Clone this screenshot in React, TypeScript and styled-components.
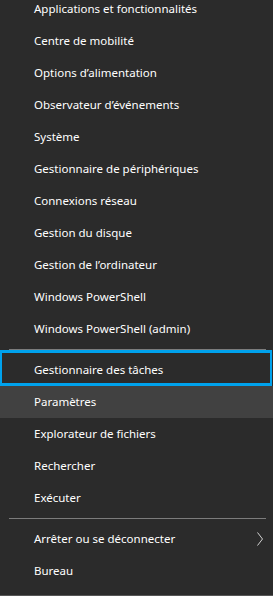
import React from "react";
import styled, { createGlobalStyle } from "styled-components";

const Global = createGlobalStyle`
  html, body { margin: 0; padding: 0; background: #2b2b2b; }
  * { box-sizing: border-box; }
`;

const Menu = styled.nav`
  width: 273px;
  height: 596px;
  overflow: hidden;
  background: #2b2b2b;
  border-bottom: 1px solid #565656;
  font-family: "Noto Sans", "Open Sans", sans-serif;
  font-size: 11.5px;
  color: #ffffff;
`;

const List = styled.div`
  margin-top: -7px;
  display: flex;
  flex-direction: column;
`;

const Item = styled.div<{ $hover?: boolean; $focus?: boolean }>`
  position: relative;
  height: 32px;
  display: flex;
  align-items: center;
  padding: 0 10px 2px 34px;
  white-space: nowrap;
  background: ${(p) => (p.$hover ? "#414141" : "transparent")};
  ${(p) =>
    p.$focus
      ? `&::after {
    content: "";
    position: absolute;
    top: -4px;
    bottom: 0;
    left: 0;
    right: 1px;
    border-style: solid;
    border-color: #00a2ed;
    border-width: 3px 2px;
  }`
      : ""}
`;

const Label = styled.span`
  flex: 1;
`;

const Separator = styled.div`
  height: 1px;
  margin: 4px 7px 4px 9px;
  background: #7c7c7c;
`;

const ChevronBox = styled.span`
  display: flex;
  padding-top: 2px;
`;

const Chevron = () => (
  <svg width="6" height="14" viewBox="0 0 6 14">
    <polyline points="0.5,0.5 5.5,7 0.5,13.5" fill="none" stroke="#d0d0d0" strokeWidth="1" />
  </svg>
);

const group1 = [
  "Applications et fonctionnalités",
  "Centre de mobilité",
  "Options d’alimentation",
  "Observateur d’événements",
  "Système",
  "Gestionnaire de périphériques",
  "Connexions réseau",
  "Gestion du disque",
  "Gestion de l’ordinateur",
  "Windows PowerShell",
  "Windows PowerShell (admin)",
];

export default function App() {
  return (
    <>
      <Global />
      <Menu>
        <List>
          {group1.map((t) => (
            <Item key={t}>
              <Label>{t}</Label>
            </Item>
          ))}
          <Separator />
          <Item $focus>
            <Label>Gestionnaire des tâches</Label>
          </Item>
          <Item $hover>
            <Label>Paramètres</Label>
          </Item>
          <Item>
            <Label>Explorateur de fichiers</Label>
          </Item>
          <Item>
            <Label>Rechercher</Label>
          </Item>
          <Item>
            <Label>Exécuter</Label>
          </Item>
          <Separator />
          <Item>
            <Label>Arrêter ou se déconnecter</Label>
            <ChevronBox>
              <Chevron />
            </ChevronBox>
          </Item>
          <Item>
            <Label>Bureau</Label>
          </Item>
        </List>
      </Menu>
    </>
  );
}
